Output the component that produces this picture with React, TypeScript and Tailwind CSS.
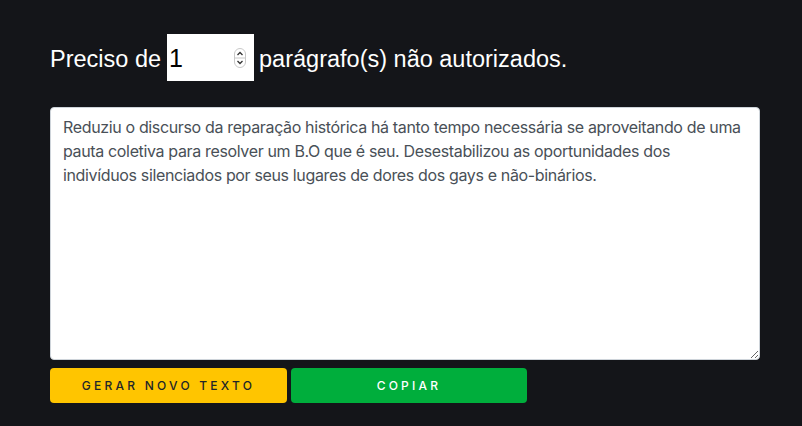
import { useState } from 'react'

const texto =
  'Reduziu o discurso da reparação histórica há tanto tempo necessária se aproveitando de uma\npauta coletiva para resolver um B.O que é seu. Desestabilizou as oportunidades dos\nindivíduos silenciados por seus lugares de dores dos gays e não-binários.'

// Little up/down stepper drawn like the native one
function Stepper() {
  return (
    <svg width="12" height="20" viewBox="0 0 12 20" className="shrink-0">
      <rect x="0.5" y="0.5" width="11" height="19" rx="5.5" fill="#fff" stroke="#c8c8c8" />
      <line x1="1" y1="10" x2="11" y2="10" stroke="#c8c8c8" />
      <path d="M3.5 7 L6 4.5 L8.5 7" fill="none" stroke="#333" strokeWidth="1.3" />
      <path d="M3.5 13 L6 15.5 L8.5 13" fill="none" stroke="#333" strokeWidth="1.3" />
    </svg>
  )
}

export default function App() {
  const [paragrafos] = useState(1)

  return (
    <div className="min-h-screen w-full bg-[#141519] px-[50px] pt-[34px]">
      <h1 className="flex items-center text-[23.5px] text-white font-['Liberation_Sans',Arial,sans-serif]">
        <span className="pt-[5px]">Preciso de</span>
        <div className="ml-[6px] mr-[5px] flex h-[47px] w-[87px] items-center justify-between bg-white pl-[2px] pr-[8px]">
          <span className="pt-[3px] text-[25px] text-black">{paragrafos}</span>
          <Stepper />
        </div>
        <span className="pt-[5px]">parágrafo(s) não autorizados.</span>
      </h1>

      <textarea
        className="mt-[26px] block h-[253px] w-[710px] rounded-[4px] border border-[#ced4da] bg-white px-[12px] py-[7px] text-[16px] leading-[24px] tracking-[-0.022em] text-[#495057] outline-none font-['Inter',sans-serif]"
        defaultValue={texto}
      />

      <div className="mt-[8px] flex gap-[4px] font-['Inter',sans-serif]">
        <button className="h-[35px] w-[237px] rounded-[4px] bg-[#ffc500] text-[12px] font-medium tracking-[0.27em] text-[#212529]">
          GERAR NOVO TEXTO
        </button>
        <button className="h-[35px] w-[236px] rounded-[4px] bg-[#00ae3c] text-[12px] font-medium tracking-[0.27em] text-white">
          COPIAR
        </button>
      </div>
    </div>
  )
}
